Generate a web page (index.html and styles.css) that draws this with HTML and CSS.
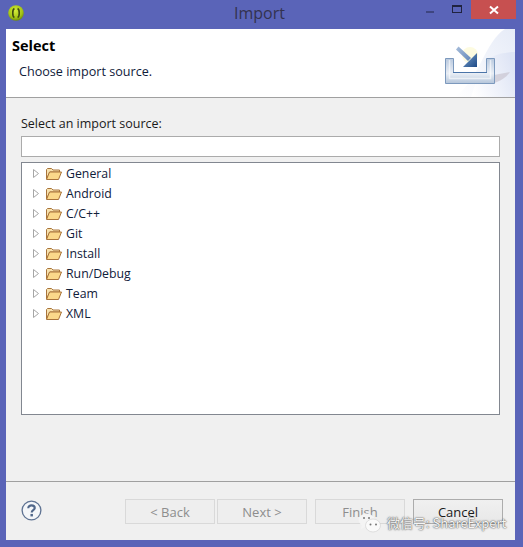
FILE: index.html
```html
<!DOCTYPE html>
<html lang="en">
<head>
<meta charset="utf-8">
<title>Import</title>
<link rel="stylesheet" href="styles.css">
</head>
<body>
<div class="window">
  <header class="titlebar">
    <svg class="app-icon" width="16" height="16" viewBox="0 0 16 16">
      <defs><radialGradient id="g" cx="45%" cy="35%" r="65%"><stop offset="0" stop-color="#d4ec3a"/><stop offset="0.7" stop-color="#a4c414"/><stop offset="1" stop-color="#6c8a0c"/></radialGradient></defs>
      <circle cx="8" cy="8" r="7.8" fill="url(#g)"/>
      <path d="M6.4 3.5C4.2 4.5 4.2 11.5 6.4 12.5M9.6 3.5C11.8 4.5 11.8 11.5 9.6 12.5" fill="none" stroke="#3d4a12" stroke-width="1.6"/>
    </svg>
    <div class="title">Import</div>
    <div class="controls">
      <span class="ctl ctl-min"><i></i></span>
      <span class="ctl ctl-max"><i></i></span>
      <span class="ctl ctl-close">
        <svg width="10" height="10" viewBox="0 0 10 10"><path d="M1 1.5L9 8.5M9 1.5L1 8.5" stroke="#fff" stroke-width="2"/></svg>
      </span>
    </div>
  </header>
  <main class="client">
    <section class="banner">
      <div class="banner-text">
        <h1>Select</h1>
        <p>Choose import source.</p>
      </div>
      <div class="banner-art">
        <svg width="80" height="68" viewBox="0 0 80 68">
          <defs>
            <linearGradient id="sw" x1="0" y1="1" x2="1" y2="0"><stop offset="0" stop-color="#fff"/><stop offset="1" stop-color="#e6ebf7"/></linearGradient>
            <linearGradient id="sw2" x1="0" y1="0.8" x2="1" y2="0.4"><stop offset="0" stop-color="#fff"/><stop offset="1" stop-color="#dfe5f5"/></linearGradient>
            <linearGradient id="tray" x1="0" y1="0" x2="0" y2="1"><stop offset="0" stop-color="#b9c9de"/><stop offset="0.6" stop-color="#e9eef5"/><stop offset="1" stop-color="#b4c5da"/></linearGradient>
            <linearGradient id="arrow" x1="0" y1="0" x2="1" y2="1"><stop offset="0" stop-color="#7ea3cf"/><stop offset="1" stop-color="#1d4a86"/></linearGradient>
            <linearGradient id="tail" x1="0" y1="0" x2="1" y2="1"><stop offset="0" stop-color="#a9bedb"/><stop offset="1" stop-color="#6288ba"/></linearGradient>
          </defs>
          <path d="M70 0C50 12 45 50 20 68H80V0Z" fill="url(#sw)"/>
          <path d="M48 32C58 26 70 23 80 23V68H36Z" fill="url(#sw2)"/>
          <path d="M59 54C65 52 71 49 75 43L59 46Z" fill="#c9c4d0" opacity="0.7"/>
          <circle cx="35" cy="26" r="8" fill="#fdfbe0"/>
          <path d="M10.500 29.500H18.500V43.500H51.500V29.500H59.500V54.500H10.500Z" fill="url(#tray)" stroke="#7c99bd"/>
          <path d="M14.500 31V49.500H55.500V31" fill="none" stroke="#fff" stroke-width="1.500" opacity="0.6"/>
          <path d="M18 43.500H52" stroke="#4a74a8"/>
          <path d="M21 20.500L23.500 17.500L36 29L33 32Z" fill="url(#tail)"/>
          <path d="M42 24V38H28Z" fill="url(#arrow)"/>
        </svg>
      </div>
    </section>
    <section class="content">
      <label class="field-label" for="filter">Select an import source:</label>
      <input id="filter" class="filter" type="text">
      <ul class="tree">
        <li class="node"><svg class="twisty"><use href="#twist"/></svg><svg class="folder"><use href="#fold"/></svg>General</li>
        <li class="node"><svg class="twisty"><use href="#twist"/></svg><svg class="folder"><use href="#fold"/></svg>Android</li>
        <li class="node"><svg class="twisty"><use href="#twist"/></svg><svg class="folder"><use href="#fold"/></svg>C/C++</li>
        <li class="node"><svg class="twisty"><use href="#twist"/></svg><svg class="folder"><use href="#fold"/></svg>Git</li>
        <li class="node"><svg class="twisty"><use href="#twist"/></svg><svg class="folder"><use href="#fold"/></svg>Install</li>
        <li class="node"><svg class="twisty"><use href="#twist"/></svg><svg class="folder"><use href="#fold"/></svg>Run/Debug</li>
        <li class="node"><svg class="twisty"><use href="#twist"/></svg><svg class="folder"><use href="#fold"/></svg>Team</li>
        <li class="node"><svg class="twisty"><use href="#twist"/></svg><svg class="folder"><use href="#fold"/></svg>XML</li>
      </ul>
    </section>
    <footer class="footer">
      <svg class="help" width="21" height="21" viewBox="0 0 22 22">
        <circle cx="11" cy="11" r="9.8" fill="#f4f6f9" stroke="#5f7393" stroke-width="1.4"/>
        <path d="M7.600 8.600C7.600 6.600 9.200 5.600 11 5.600C13 5.600 14.400 6.700 14.400 8.400C14.400 10.600 11.200 10.700 11.200 13" fill="none" stroke="#51678a" stroke-width="2.2"/>
        <rect x="9.900" y="14.600" width="2.600" height="2.600" fill="#51678a"/>
      </svg>
      <div class="buttons">
        <button class="btn" disabled>&lt; Back</button>
        <button class="btn" disabled>Next &gt;</button>
        <button class="btn btn-finish" disabled>Finish</button>
        <button class="btn btn-cancel">Cancel</button>
      </div>
    </footer>
  </main>
  <div class="watermark">
    <svg width="23" height="20" viewBox="0 0 23 20">
      <ellipse cx="8.500" cy="7" rx="8" ry="6.500" fill="#f4f4f4"/>
      <path d="M4 12L3 16L9 13Z" fill="#f4f4f4"/>
      <ellipse cx="15" cy="12.500" rx="7.500" ry="6.500" fill="#fafafa" stroke="#cfcfcf" stroke-width="0.6"/>
      <circle cx="12.500" cy="11.500" r="1" fill="#777"/><circle cx="18" cy="11.500" r="1" fill="#777"/>
      <circle cx="6" cy="5" r="1" fill="#777"/><circle cx="11" cy="5" r="1" fill="#777"/>
    </svg>
    <span>微信号: ShareExpert</span>
  </div>
</div>
<svg class="defs" width="0" height="0">
  <defs>
    <symbol id="fold" viewBox="0 0 16 13">
      <path d="M0.500 12V2.500L1.500 1.500H5.500L7 3H13.500V5H4L0.500 12Z" fill="#f7e2ae" stroke="#a9743a"/>
      <path d="M0.500 12.500L3.500 5H15.500L12.500 12.500Z" fill="#fbd98a" stroke="#a9743a"/>
    </symbol>
    <symbol id="twist" viewBox="0 0 6 9">
      <path d="M0.500 0.500L5.500 4.500L0.500 8.500Z" fill="#fff" stroke="#a6a6a6"/>
    </symbol>
  </defs>
</svg>
</body>
</html>
```
FILE: styles.css
```css
* { box-sizing: border-box; }
html, body { margin: 0; padding: 0; }
body {
  width: 523px;
  height: 547px;
  overflow: hidden;
  background: #5a64b8;
  font-family: "Open Sans", "Noto Sans", sans-serif;
  font-size: 12px;
  color: #1a1a1a;
}
.window {
  position: relative;
  height: 547px;
  padding: 0 8px 7px 6px;
  display: flex;
  flex-direction: column;
}
.titlebar {
  position: relative;
  height: 29px;
  flex: none;
  display: flex;
  align-items: flex-start;
}
.app-icon { margin: 5px 0 0 2px; }
.title {
  position: absolute;
  left: 0;
  right: 2px;
  top: 3px;
  text-align: center;
  font-size: 16px;
  line-height: 21px;
  color: #33324f;
}
.controls {
  margin-left: auto;
  margin-right: -1px;
  display: flex;
  height: 19px;
}
.ctl {
  display: flex;
  align-items: center;
  justify-content: center;
}
.ctl-min { width: 26px; }
.ctl-min i { display: block; width: 8px; height: 2px; margin-top: 5px; background: #3e4580; }
.ctl-max { width: 28px; }
.ctl-max i { display: block; width: 10px; height: 8px; margin-top: -1px; border: 1px solid #20233f; border-top-width: 2px; }
.ctl-close { width: 45px; background: #c75050; }
.client {
  flex: 1;
  background: #f0f0f0;
  display: flex;
  flex-direction: column;
  min-height: 0;
}
.banner {
  height: 69px;
  flex: none;
  background: #fff;
  border-bottom: 1px solid #a0a0a0;
  display: flex;
  justify-content: space-between;
}
.banner-text { padding: 8px 0 0 6px; }
.banner h1 {
  margin: 0;
  font-size: 14.5px;
  line-height: 18px;
  font-weight: 700;
  color: #000;
}
.banner p {
  margin: 8px 0 0 7px;
  font-size: 12.6px;
  line-height: 17px;
  color: #10203a;
}
.banner-art { width: 80px; height: 68px; line-height: 0; overflow: hidden; }
.content {
  flex: 1;
  padding: 17px 15px 0 15px;
  display: flex;
  flex-direction: column;
  min-height: 0;
}
.field-label { display: block; font-size: 12.5px; line-height: 17px; }
.filter {
  display: block;
  width: 479px;
  height: 21px;
  margin-top: 4px;
  border: 1px solid #ababab;
  background: #fff;
  padding: 0;
  outline: none;
}
.tree {
  list-style: none;
  margin: 5px 0 0;
  padding: 0;
  width: 479px;
  height: 253px;
  background: #fff;
  border: 1px solid #828790;
}
.node {
  height: 20px;
  display: flex;
  align-items: center;
  font-size: 12.3px;
  color: #10203a;
}
.twisty { width: 6px; height: 9px; margin-left: 11px; }
.folder { width: 16px; height: 13px; margin: 0 4px 0 7px; }
.footer {
  height: 59px;
  flex: none;
  border-top: 1px solid #a0a0a0;
  display: flex;
  align-items: flex-start;
  padding: 17px 12px 0 15px;
}
.help { margin-top: 1px; }
.buttons { margin-left: auto; display: flex; }
.btn {
  width: 90px;
  height: 25px;
  padding: 0;
  margin-left: 2px;
  background: #eeeeee;
  border: 1px solid #d9d9d9;
  font: 13px "Open Sans", "Noto Sans", sans-serif;
  color: #8d8d8d;
}
.btn-finish { margin-left: 8px; }
.btn-cancel { margin-left: 8px; border-color: #acacac; color: #1a1a1a; background: linear-gradient(#f0f0f0, #e8e8e8); }
.defs { position: absolute; }
.watermark {
  position: absolute;
  left: 358px;
  top: 513px;
  display: flex;
  align-items: center;
  gap: 6px;
  font-family: "Noto Sans CJK SC", "Open Sans", sans-serif;
  font-size: 13px;
  line-height: 20px;
  color: #f4f4f4;
  text-shadow: 0 0 2px #555, 0 0 1px #555;
}
```
